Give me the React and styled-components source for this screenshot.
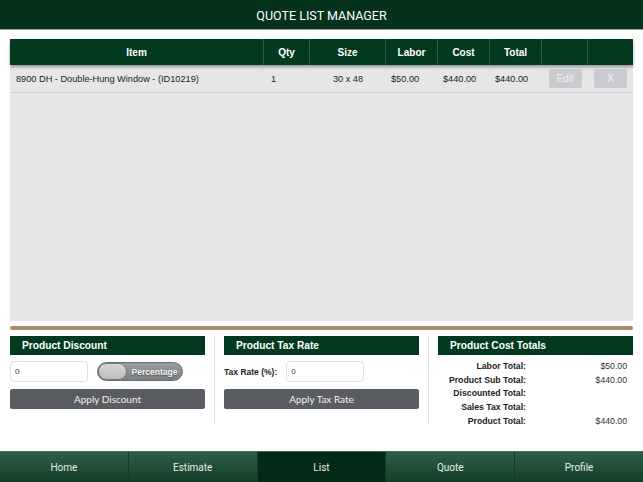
import styled, { createGlobalStyle } from "styled-components";

const GlobalStyle = createGlobalStyle`
  html, body {
    margin: 0;
    padding: 0;
    background: #ffffff;
    font-family: "Liberation Sans", Arial, sans-serif;
  }
`;

const columns = [
  { name: "Item", width: 254 },
  { name: "Qty", width: 46 },
  { name: "Size", width: 76 },
  { name: "Labor", width: 52 },
  { name: "Cost", width: 52 },
  { name: "Total", width: 52 },
  { name: "", width: 46 },
  { name: "", width: 45 },
];

const totals = [
  { label: "Labor Total:", value: "$50.00" },
  { label: "Product Sub Total:", value: "$440.00" },
  { label: "Discounted Total:", value: "" },
  { label: "Sales Tax Total:", value: "" },
  { label: "Product Total:", value: "$440.00" },
];

const tabs = ["Home", "Estimate", "List", "Quote", "Profile"];

function App() {
  return (
    <>
      <GlobalStyle />
      <Page>
        <TopBar>QUOTE LIST MANAGER</TopBar>
        <TableWrap>
          <HeadRow>
            {columns.map((c, i) => (
              <HeadCell key={i} $w={c.width} $last={i === columns.length - 1}>
                {c.name}
              </HeadCell>
            ))}
          </HeadRow>
          <TableBody>
            <Row>
              <Cell $w={254} $pad={6}>
                8900 DH - Double-Hung Window - (ID10219)
              </Cell>
              <Cell $w={46} $pad={7}>1</Cell>
              <Cell $w={76} $center>30 x 48</Cell>
              <Cell $w={52} $pad={5}>$50.00</Cell>
              <Cell $w={52} $pad={5}>$440.00</Cell>
              <Cell $w={52} $pad={5}>$440.00</Cell>
              <Cell $w={46} $center>
                <RowButton>Edit</RowButton>
              </Cell>
              <Cell $w={45} $center>
                <RowButton>X</RowButton>
              </Cell>
            </Row>
          </TableBody>
        </TableWrap>
        <Rule />
        <Panels>
          <Panel>
            <PanelTitle>Product Discount</PanelTitle>
            <FieldRow>
              <Input defaultValue="0" $w={78} />
              <Toggle>
                <Knob />
                <ToggleLabel>Percentage</ToggleLabel>
              </Toggle>
            </FieldRow>
            <ActionButton>Apply Discount</ActionButton>
          </Panel>
          <Divider />
          <Panel>
            <PanelTitle>Product Tax Rate</PanelTitle>
            <FieldRow>
              <FieldLabel>Tax Rate (%):</FieldLabel>
              <Input defaultValue="0" $w={78} />
            </FieldRow>
            <ActionButton>Apply Tax Rate</ActionButton>
          </Panel>
          <Divider />
          <Panel>
            <PanelTitle>Product Cost Totals</PanelTitle>
            <TotalsList>
              {totals.map((t) => (
                <TotalRow key={t.label}>
                  <TotalLabel>{t.label}</TotalLabel>
                  <TotalValue>{t.value}</TotalValue>
                </TotalRow>
              ))}
            </TotalsList>
          </Panel>
        </Panels>
        <Spacer />
        <TabBar>
          {tabs.map((t) => (
            <Tab key={t} $active={t === "List"}>
              {t}
            </Tab>
          ))}
        </TabBar>
      </Page>
    </>
  );
}

export default App;

const Page = styled.div`
  width: 643px;
  height: 482px;
  display: flex;
  flex-direction: column;
  overflow: hidden;
`;

const TopBar = styled.header`
  height: 28px;
  flex-shrink: 0;
  background: #04321b;
  border-bottom: 1px solid #9aa39d;
  color: #ffffff;
  font-family: Roboto, sans-serif;
  font-size: 12.5px;
  display: flex;
  align-items: center;
  justify-content: center;
  padding-top: 1px;
`;

const TableWrap = styled.div`
  margin: 9px 10px 0;
  display: flex;
  flex-direction: column;
`;

const HeadRow = styled.div`
  height: 26px;
  display: flex;
  background: #023a1f;
  box-shadow: 0 2px 3px rgba(0, 0, 0, 0.35);
  position: relative;
  z-index: 1;
`;

const HeadCell = styled.div`
  width: ${(p) => p.$w}px;
  flex-shrink: 0;
  display: flex;
  align-items: center;
  justify-content: center;
  color: #ffffff;
  font-size: 10px;
  font-weight: bold;
  border-right: ${(p) => (p.$last ? "none" : "1px solid #2a5a40")};
  box-sizing: border-box;
`;

const TableBody = styled.div`
  height: 256px;
  background: #e6e6e6;
`;

const Row = styled.div`
  height: 28px;
  display: flex;
  align-items: center;
  border-bottom: 1px solid #d2d2d2;
  box-sizing: border-box;
`;

const Cell = styled.div`
  width: ${(p) => p.$w}px;
  flex-shrink: 0;
  font-size: 9.2px;
  color: #222;
  display: flex;
  justify-content: ${(p) => (p.$center ? "center" : "flex-start")};
  padding-left: ${(p) => p.$pad || 0}px;
  box-sizing: border-box;
`;

const RowButton = styled.button`
  width: 33px;
  height: 19px;
  border: none;
  border-radius: 2px;
  background: #c8ccd0;
  color: #eef0f2;
  font-family: "Liberation Sans", Arial, sans-serif;
  font-size: 10px;
  padding: 0;
`;

const Rule = styled.div`
  height: 4px;
  margin: 5px 10px 0;
  background: #a58d6c;
  border-radius: 2px;
`;

const Panels = styled.div`
  display: flex;
  margin: 6px 10px 0;
`;

const Panel = styled.div`
  width: 195px;
  display: flex;
  flex-direction: column;
`;

const Divider = styled.div`
  width: 1px;
  background: #e2e2e2;
  margin: 0 9px;
  height: 88px;
`;

const PanelTitle = styled.div`
  height: 19px;
  background: #023a1f;
  color: #ffffff;
  font-size: 10.2px;
  font-weight: bold;
  display: flex;
  align-items: center;
  padding-left: 12px;
`;

const FieldRow = styled.div`
  display: flex;
  align-items: center;
  gap: 9px;
  margin-top: 6px;
  height: 21px;
`;

const Input = styled.input`
  width: ${(p) => p.$w}px;
  height: 21px;
  box-sizing: border-box;
  border: 1px solid #e0e0e0;
  border-radius: 4px;
  padding: 0 4px;
  font-family: "Liberation Sans", Arial, sans-serif;
  font-size: 8px;
  color: #333;
  outline: none;
`;

const FieldLabel = styled.span`
  font-size: 8.5px;
  font-weight: bold;
  color: #222;
`;

const Toggle = styled.div`
  width: 86px;
  height: 19px;
  box-sizing: border-box;
  border-radius: 10px;
  border: 1px solid #6b6e71;
  background: linear-gradient(#9a9da0, #7d8083);
  display: flex;
  align-items: center;
`;

const Knob = styled.div`
  width: 29px;
  height: 17px;
  border-radius: 9px;
  background: linear-gradient(#d8d8d8, #bcbcbc);
  border: 1px solid #7a7a7a;
  box-sizing: border-box;
  flex-shrink: 0;
`;

const ToggleLabel = styled.span`
  flex: 1;
  text-align: center;
  font-size: 8.5px;
  font-weight: bold;
  color: #f2f2f2;
  text-shadow: 0 1px 1px rgba(0, 0, 0, 0.4);
`;

const ActionButton = styled.button`
  margin-top: 7px;
  height: 20px;
  border: none;
  border-radius: 2px;
  background: #595d61;
  color: #f0f0f0;
  font-family: Lato, sans-serif;
  font-size: 10px;
  padding: 0;
`;

const TotalsList = styled.div`
  display: flex;
  flex-direction: column;
  margin-top: 4px;
`;

const TotalRow = styled.div`
  display: flex;
  height: 13.8px;
  align-items: center;
`;

const TotalLabel = styled.span`
  width: 88px;
  text-align: right;
  font-size: 8.7px;
  font-weight: bold;
  color: #222;
`;

const TotalValue = styled.span`
  flex: 1;
  text-align: right;
  font-size: 8.7px;
  color: #333;
  padding-right: 6px;
`;

const Spacer = styled.div`
  flex: 1;
`;

const TabBar = styled.nav`
  height: 30px;
  flex-shrink: 0;
  display: flex;
  border-top: 1px solid #45705a;
  background: #0b2f1c;
`;

const Tab = styled.div`
  flex: 1;
  display: flex;
  align-items: center;
  justify-content: center;
  font-family: Roboto, sans-serif;
  font-size: 10px;
  color: #e8efe9;
  border-right: 1px solid #153c27;
  background: ${(p) =>
    p.$active ? "#032a16" : "linear-gradient(#2f5e46, #113f27)"};
  &:last-child {
    border-right: none;
  }
`;
